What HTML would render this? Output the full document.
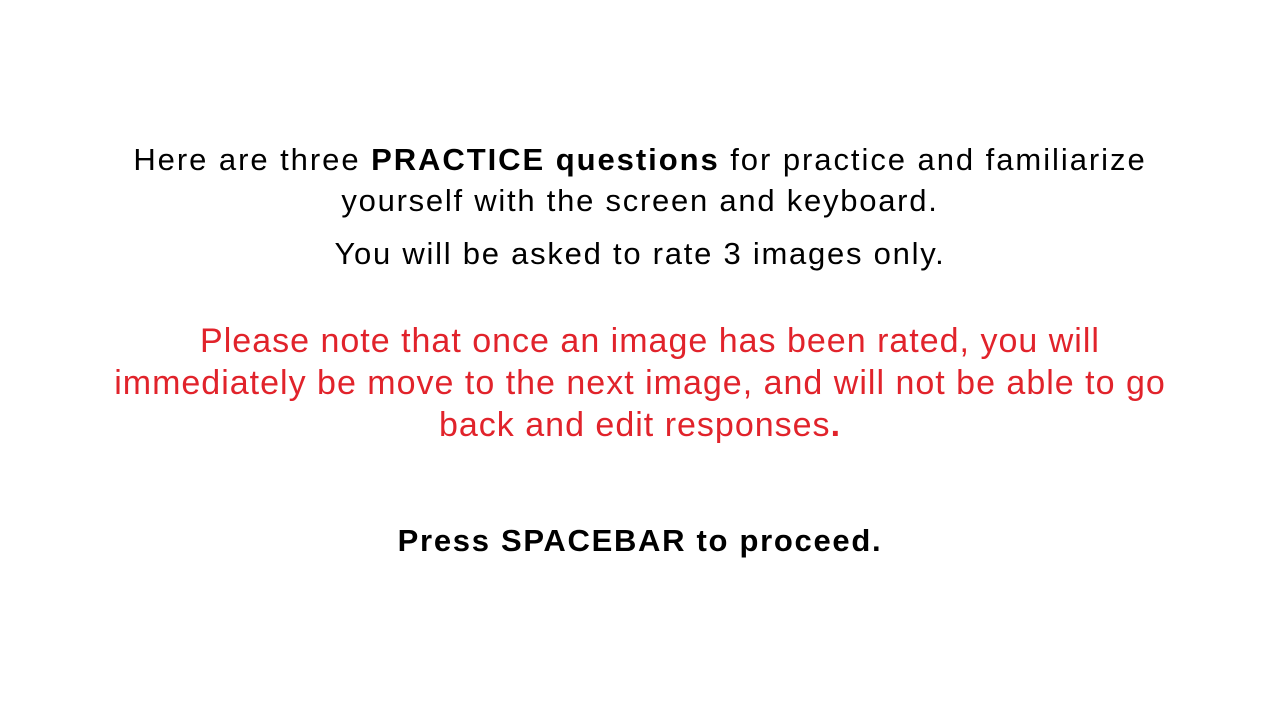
<!DOCTYPE html>
<html><head><meta charset="utf-8"><style>
html,body{margin:0;padding:0;background:#fff;width:1280px;height:720px;overflow:hidden}
.l{position:absolute;left:0;width:1280px;text-align:center;font-family:"Liberation Sans",sans-serif;white-space:nowrap;line-height:1}
.k{color:#000;font-size:31px;letter-spacing:1.75px}
.r{color:#e1232b;font-size:34px;letter-spacing:1px}
</style></head><body>
<div class="l k" style="top:144px;letter-spacing:1.95px">Here are three <b>PRACTICE questions</b> for practice and familiarize</div>
<div class="l k" style="top:185px">yourself with the screen and keyboard.</div>
<div class="l k" style="top:238px">You will be asked to rate 3 images only.</div>
<div class="l r" style="top:324px;left:10px">Please note that once an image has been rated, you will</div>
<div class="l r" style="top:366px">immediately be move to the next image, and will not be able to go</div>
<div class="l r" style="top:408px">back and edit responses<b>.</b></div>
<div class="l k" style="top:525px;font-weight:bold;font-size:31px;letter-spacing:1.7px">Press SPACEBAR to proceed.</div>
</body></html>
